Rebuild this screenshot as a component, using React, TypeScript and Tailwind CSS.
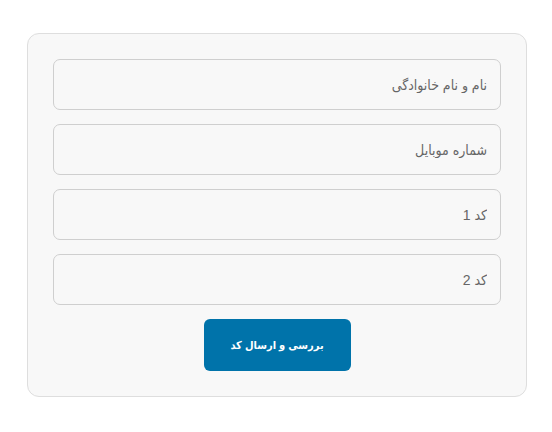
import React from 'react';

const fields = ['نام و نام خانوادگی', 'شماره موبایل', 'کد 1', 'کد 2'];

export default function App() {
    return (
        <div className="min-h-screen bg-white pt-[33px] pl-[27px]">
            <form
                dir="rtl"
                className="w-[500px] h-[364px] bg-[#f8f8f8] border border-[#dedede] rounded-[12px] p-[25px] flex flex-col gap-[14px]"
                style={{ fontFamily: '"Liberation Sans", "DejaVu Sans Condensed", "DejaVu Sans", sans-serif' }}
            >
                {fields.map((f) => (
                    <input
                        key={f}
                        type="text"
                        placeholder={f}
                        className="h-[52px] w-full bg-[#f8f8f8] border border-[#cfcfcf] rounded-[7px] pl-[12px] pr-[13px] text-[14px] font-stretch-condensed text-[#555] placeholder:text-[#666] outline-none"
                    />
                ))}
                <div className="flex justify-center">
                    <button
                        type="button"
                        className="w-[147px] h-[52px] bg-[#0073aa] text-white text-[11px] font-bold font-stretch-condensed rounded-[6px]"
                    >
                        بررسی و ارسال کد
                    </button>
                </div>
            </form>
        </div>
    );
}
